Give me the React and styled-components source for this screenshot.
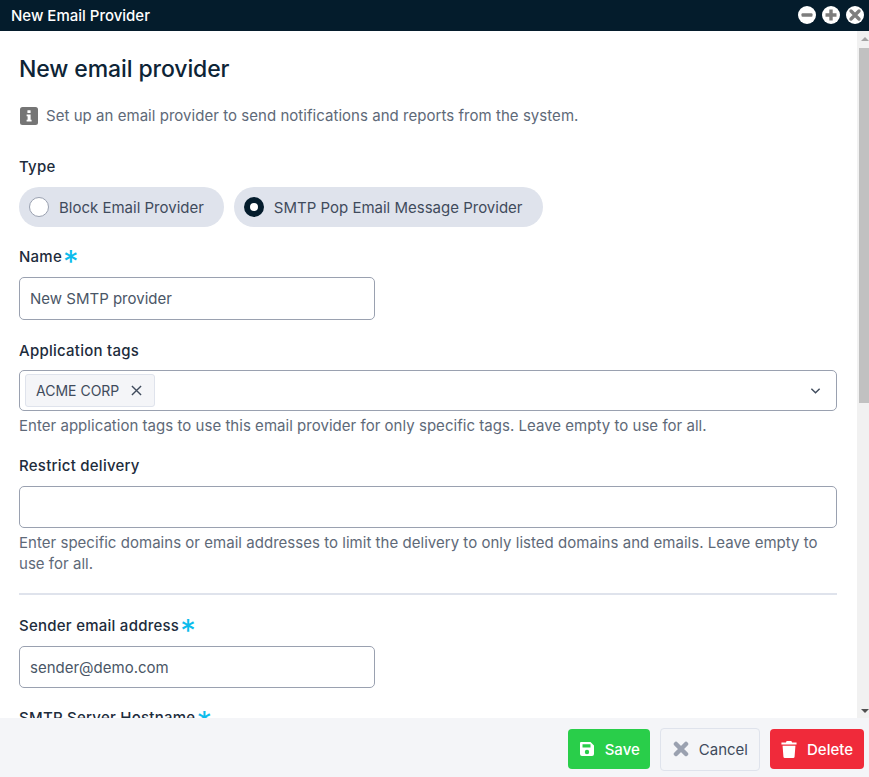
import React from 'react'
import styled, { createGlobalStyle } from 'styled-components'

const Global = createGlobalStyle`
html, body { margin: 0; padding: 0; height: 100%; background: #fff; }
body { font-family: Inter, "Liberation Sans", sans-serif; overflow: hidden; }
#root { height: 100%; }
* { box-sizing: border-box; }
`

function Field({ label, required, help, value, short, tall }) {
  return (
    <FieldRow $tall={tall}>
      <Label>
        {label}
        {required && <Star>*</Star>}
      </Label>
      <TextInput $short={short} $tall={tall} readOnly value={value} />
      {help && <Help>{help}</Help>}
    </FieldRow>
  )
}

export default function App() {
  return (
    <>
      <Global />
      <Window>
        <TitleBar>
          <TitleText>New Email Provider</TitleText>
          <WindowButtons>
            <WindowButton>
              <svg width="18" height="18" viewBox="0 0 18 18"><rect x="3.500" y="7.300" width="11" height="3.400" rx="1" fill="#7d7d7d" /></svg>
            </WindowButton>
            <WindowButton>
              <svg width="18" height="18" viewBox="0 0 18 18"><path d="M7.300 3.500h3.400v3.800h3.800v3.400h-3.800v3.800H7.300v-3.800H3.500V7.300h3.800z" fill="#7d7d7d" /></svg>
            </WindowButton>
            <WindowButton>
              <svg width="18" height="18" viewBox="0 0 18 18"><path d="M5 5l8 8M13 5l-8 8" stroke="#7d7d7d" strokeWidth="3.400" strokeLinecap="round" /></svg>
            </WindowButton>
          </WindowButtons>
        </TitleBar>

        <Main>
          <Body>
            <Heading>New email provider</Heading>
            <Info>
              <svg width="18" height="18" viewBox="0 0 18 18">
                <rect width="18" height="18" rx="2.500" fill="#757575" />
                <rect x="7.400" y="3.200" width="3.200" height="2.800" rx=".5" fill="#fff" />
                <path d="M6.600 7.400h4v5.400h1v1.800H6.600v-1.800h1V9.200h-1z" fill="#fff" />
              </svg>
              Set up an email provider to send notifications and reports from the system.
            </Info>

            <TypeGroup>
              <Label>Type</Label>
              <Pills>
                <Pill>
                  <Radio />
                  Block Email Provider
                </Pill>
                <Pill>
                  <Radio $checked />
                  SMTP Pop Email Message Provider
                </Pill>
              </Pills>
            </TypeGroup>

            <Field label="Name" required short tall value="New SMTP provider" />

            <FieldRow>
              <Label>Application tags</Label>
              <TagSelect>
                <Tag>
                  ACME CORP
                  <svg width="11" height="11" viewBox="0 0 12 12"><path d="M1 1l10 10M11 1L1 11" stroke="#3f4b5c" strokeWidth="1.500" /></svg>
                </Tag>
                <svg width="11" height="8" viewBox="0 0 12 8"><path d="M1.500 1.500L6 6l4.500-4.500" fill="none" stroke="#3f4b5c" strokeWidth="1.500" /></svg>
              </TagSelect>
              <Help>Enter application tags to use this email provider for only specific tags. Leave empty to use for all.</Help>
            </FieldRow>

            <Field
              label="Restrict delivery"
              value=""
              help="Enter specific domains or email addresses to limit the delivery to only listed domains and emails. Leave empty to use for all."
            />

            <Divider />

            <Field label="Sender email address" required short value="sender@demo.com" />
            <Field label="SMTP Server Hostname" required short value="" />
          </Body>
          <ScrollRail>
            <ArrowUp />
            <ScrollThumb />
            <ArrowDown />
          </ScrollRail>
        </Main>

        <Footer>
          <ActionButton $bg="#29ce4a" $color="#fff">
            <svg width="16" height="16" viewBox="0 0 16 16">
              <path fillRule="evenodd" d="M2 1h9.500L15 4.500V13a2 2 0 0 1-2 2H3a2 2 0 0 1-2-2V2a1 1 0 0 1 1-1zm1.500 2.200v3.300h8V3.200zM8 8.800a2.200 2.200 0 1 0 0 4.400 2.200 2.200 0 0 0 0-4.400z" fill="#fff" />
            </svg>
            Save
          </ActionButton>
          <ActionButton $bg="#f4f5f8" $color="#3f4b5c" $border="#dfe3ec" $wide>
            <svg width="16" height="16" viewBox="0 0 16 16"><path d="M3 3l10 10M13 3L3 13" stroke="#9aa1b0" strokeWidth="4.500" strokeLinecap="round" /></svg>
            Cancel
          </ActionButton>
          <ActionButton $bg="#f02a3a" $color="#fff" $wide>
            <svg width="16" height="17" viewBox="0 0 16 18">
              <path d="M5.500 0h5l.8 1.600H16v2H0v-2h4.700zM1.200 5h13.600l-.9 11.600A1.500 1.500 0 0 1 12.400 18H3.600a1.500 1.500 0 0 1-1.500-1.400z" fill="#fff" />
            </svg>
            Delete
          </ActionButton>
        </Footer>
      </Window>
    </>
  )
}

const Window = styled.div`
display:flex;
flex-direction:column;
height:777px;
width:869px;
`
const TitleBar = styled.div`
flex:0 0 31px;
height:31px;
background:#041c2c;
color:#fff;
display:flex;
align-items:center;
justify-content:space-between;
padding:0 5px 0 11px;
`
const TitleText = styled.div`
font-size:15px;
font-weight:500;
line-height:31px;
`
const WindowButtons = styled.div`
display:flex;
gap:6px;
margin-bottom:1px;
`
const WindowButton = styled.div`
width:18px;
height:18px;
border-radius:50%;
background:#fff;
`
const Main = styled.div`
flex:1;
min-height:0;
display:flex;
`
const Body = styled.div`
flex:1;
min-width:0;
overflow:hidden;
padding:25px 20px 0 19px;
`
const ScrollRail = styled.div`
flex:0 0 12px;
display:flex;
flex-direction:column;
padding-left:2px;
background:#f1f1f1;
`
const ArrowUp = styled.div`
margin:6px 0 7px 2px;
width:0;
height:0;
border-left:4px solid transparent;
border-right:4px solid transparent;
border-bottom:4px solid #a3a3a3;
`
const ScrollThumb = styled.div`
flex:0 0 355px;
background:#c1c1c1;
`
const ArrowDown = styled.div`
margin:auto 0 5px 2px;
width:0;
height:0;
border-left:4px solid transparent;
border-right:4px solid transparent;
border-top:4px solid #505050;
`
const Heading = styled.h1`
margin:0;
font-size:23px;
font-weight:500;
line-height:26px;
letter-spacing:-.1px;
color:#0d2436;
`
const Info = styled.div`
display:flex;
align-items:center;
gap:8px;
margin-top:25px;
padding-left:1px;
font-size:15px;
line-height:18px;
letter-spacing:.04px;
color:#5e6978;
`
const TypeGroup = styled.div`
margin-top:31px;
`
const Pills = styled.div`
display:flex;
gap:10px;
margin-top:11px;
`
const Pill = styled.div`
height:40px;
display:flex;
align-items:center;
gap:10px;
padding:0 20px 0 10px;
border-radius:20px;
background:#dfe3ec;
font-size:15px;
color:#3f4b5c;
`
const Radio = styled.span`
width:20px;
height:20px;
border-radius:50%;
background:#fff;
border:${props => props.$checked ? '6px solid #041c2c' : '1px solid #9aa1b0'};
`
const FieldRow = styled.div`
margin-top:19px;
padding-bottom:${props => props.$tall ? '1px' : '0'};
`
const Label = styled.div`
display:flex;
align-items:center;
height:20px;
font-size:15px;
font-weight:500;
letter-spacing:.25px;
color:#1d2c3c;
`
const Star = styled.span`
align-self:flex-start;
margin-left:1px;
height:20px;
font-size:31px;
font-weight:400;
line-height:32px;
color:#0cbcec;
`
const TextInput = styled.input`
display:block;
width:${props => props.$short ? '356px' : '100%'};
height:${props => props.$tall ? '43px' : '42px'};
margin-top:11px;
padding:0 10px;
border:1px solid #9aa1b0;
border-radius:5px;
outline:none;
font-family:inherit;
font-size:15px;
color:#4a5666;
background:#fff;
`
const TagSelect = styled.div`
display:flex;
align-items:center;
justify-content:space-between;
height:41px;
margin-top:10px;
padding:0 15px 0 5px;
border:1px solid #9aa1b0;
border-radius:5px;
`
const Tag = styled.div`
display:flex;
align-items:center;
gap:12px;
height:33px;
padding:0 12px 0 10px;
border:1px solid #dfe3ec;
border-radius:3px;
background:#f4f5f8;
font-size:14px;
color:#3f4b5c;
`
const Help = styled.div`
margin-top:4px;
font-size:15px;
line-height:21px;
letter-spacing:.03px;
color:#5e6978;
`
const Divider = styled.hr`
margin:19px 0 20px;
border:none;
border-top:2px solid #dfe3ec;
`
const Footer = styled.div`
flex:0 0 59px;
display:flex;
align-items:center;
justify-content:flex-end;
gap:10px;
padding:3px 5px 0 0;
background:#f4f5f8;
`
const ActionButton = styled.div`
display:flex;
align-items:center;
gap:10px;
height:${props => props.$border ? '43px' : '40px'};
padding:0 ${props => props.$wide ? '11px' : '10px'} 0 ${props => props.$border ? '12px' : '11px'};
border-radius:4px;
border:${props => props.$border ? `1px solid ${props.$border}` : 'none'};
background:${props => props.$bg};
color:${props => props.$color};
font-size:15px;
font-weight:${props => props.$border ? 400 : 500};
`
